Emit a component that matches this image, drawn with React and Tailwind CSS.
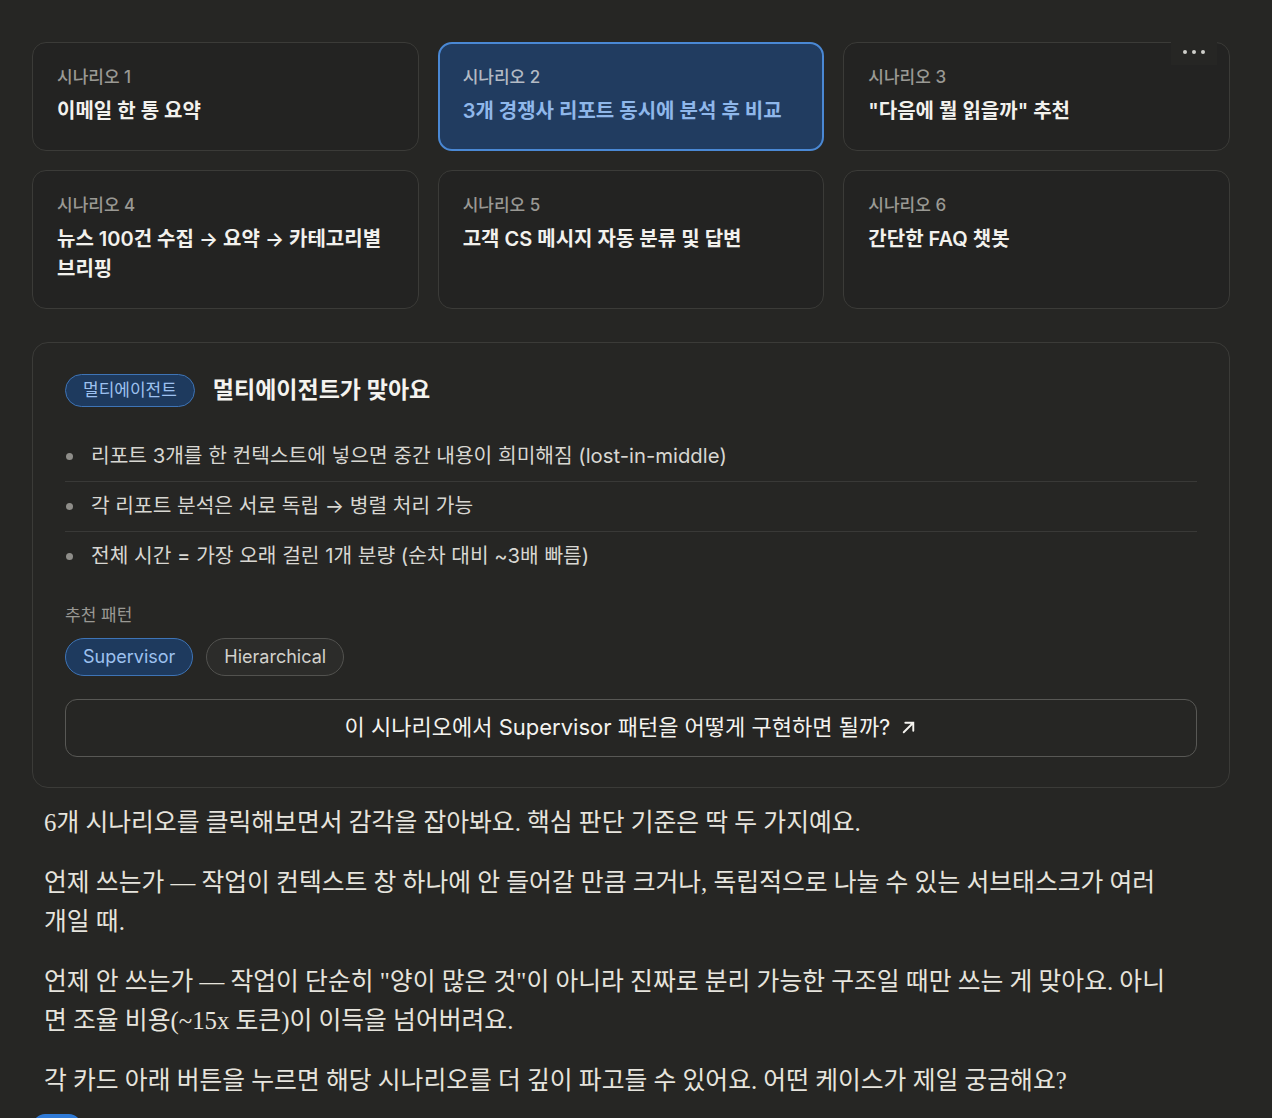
import React, { useState } from 'react';

const scenarios = [
  { id: 1, title: '이메일 한 통 요약' },
  { id: 2, title: '3개 경쟁사 리포트 동시에 분석 후 비교' },
  { id: 3, title: '"다음에 뭘 읽을까" 추천' },
  { id: 4, title: '뉴스 100건 수집 → 요약 → 카테고리별 브리핑' },
  { id: 5, title: '고객 CS 메시지 자동 분류 및 답변' },
  { id: 6, title: '간단한 FAQ 챗봇' },
];

const reasons = [
  '리포트 3개를 한 컨텍스트에 넣으면 중간 내용이 희미해짐 (lost-in-middle)',
  '각 리포트 분석은 서로 독립 → 병렬 처리 가능',
  '전체 시간 = 가장 오래 걸린 1개 분량 (순차 대비 ~3배 빠름)',
];

const widgetFont = { fontFamily: 'Inter, "Noto Sans CJK KR", sans-serif' };
const proseFont = { fontFamily: '"Liberation Serif", "Noto Sans CJK KR", serif' };

function ScenarioCard({ item, active, onSelect }) {
  return (
    <button
      type="button"
      onClick={() => onSelect(item.id)}
      className={`flex flex-col items-start justify-start text-left rounded-[14px] ${
        active
          ? 'border-2 border-[#4a88d4] bg-[#213c60] px-[23px] pt-[22px] pb-[23px]'
          : 'border border-[#3b3b38] bg-[#232322] px-6 pt-[23px] pb-[24px]'
      }`}
    >
      <div className={`text-[17px] leading-[22px] font-medium ${active ? 'text-[#b3bac4]' : 'text-[#9a9994]'}`}>
        시나리오 {item.id}
      </div>
      <div
        className={`mt-[8px] break-keep text-[20px] leading-[30px] font-semibold ${
          active ? 'text-[#8fb7ea]' : 'text-[#f2f1ed]'
        }`}
      >
        {item.title}
      </div>
    </button>
  );
}

export default function App() {
  const [selected, setSelected] = useState(2);

  return (
    <div className="min-h-screen bg-[#262624] pl-8 pt-[42px]">
      <div className="w-[1198px]" style={widgetFont}>
        <div className="relative grid grid-cols-3 gap-[19px]">
          {scenarios.map((s) => (
            <ScenarioCard key={s.id} item={s} active={s.id === selected} onSelect={setSelected} />
          ))}
          {/* hover menu */}
          <div className="absolute left-[1139px] top-[-3px] flex h-[26px] w-[46px] items-center justify-center gap-[5px] bg-[#262624]">
            <span className="h-[4px] w-[4px] rounded-full bg-[#cfcfca]" />
            <span className="h-[4px] w-[4px] rounded-full bg-[#cfcfca]" />
            <span className="h-[4px] w-[4px] rounded-full bg-[#cfcfca]" />
          </div>
        </div>

        <div className="mt-[33px] rounded-[16px] border border-[#3b3b38] px-[32px] pt-[30px] pb-[30px]">
          <div className="flex items-center gap-[18px]">
            <span className="flex h-[33px] items-center rounded-full border border-[#3e74b6] bg-[#1e3a5e] px-[17px] text-[17px] text-[#9dc1ef]">
              멀티에이전트
            </span>
            <h2 className="text-[23px] font-semibold text-[#f4f3ef]">멀티에이전트가 맞아요</h2>
          </div>

          <ul className="mt-[24px]">
            {reasons.map((r, i) => (
              <li
                key={i}
                className={`flex h-[50px] items-center gap-[18px] pl-[1px] ${
                  i < reasons.length - 1 ? 'border-b border-[#393937]' : ''
                }`}
              >
                <span className="h-[7px] w-[7px] shrink-0 rounded-full bg-[#8e8d89]" />
                <span className="text-[20.3px] text-[#d8d7d2]">{r}</span>
              </li>
            ))}
          </ul>

          <div className="mt-[22px] text-[17px] leading-[22px] text-[#9a9994]">추천 패턴</div>
          <div className="mt-[12px] flex gap-[13px]">
            <span className="flex h-[38px] items-center rounded-full border border-[#3e74b6] bg-[#1e3a5e] px-[17px] text-[18px] text-[#9dc1ef]">
              Supervisor
            </span>
            <span className="flex h-[38px] items-center rounded-full border border-[#52524f] bg-[#2c2c2a] px-[17px] text-[18px] text-[#d2d1cc]">
              Hierarchical
            </span>
          </div>

          <button
            type="button"
            className="mt-[23px] flex h-[58px] w-full items-center justify-center gap-[10px] rounded-[12px] border border-[#585855] text-[22px] text-[#f4f3ef]"
          >
            <span>이 시나리오에서 Supervisor 패턴을 어떻게 구현하면 될까?</span>
            <svg width="17" height="17" viewBox="0 0 16 16" fill="none" stroke="#f4f3ef" strokeWidth="1.8" strokeLinecap="round">
              <path d="M3.5 12.5 12.5 3.5M5 3.5h7.5V11" />
            </svg>
          </button>
        </div>
      </div>

      <div className="w-[1142px] pl-3 pt-[15px] text-[24.8px] leading-[39px] text-[#e6e4dd]" style={proseFont}>
        <p>6개 시나리오를 클릭해보면서 감각을 잡아봐요. 핵심 판단 기준은 딱 두 가지예요.</p>
        <p className="mt-[21px]">
          언제 쓰는가 — 작업이 컨텍스트 창 하나에 안 들어갈 만큼 크거나, 독립적으로 나눌 수 있는 서브태스크가 여러 개일 때.
        </p>
        <p className="mt-[21px]">
          언제 안 쓰는가 — 작업이 단순히 "양이 많은 것"이 아니라 진짜로 분리 가능한 구조일 때만 쓰는 게 맞아요. 아니면 조율 비용(~15x 토큰)이 이득을 넘어버려요.
        </p>
        <p className="mt-[21px]">
          각 카드 아래 버튼을 누르면 해당 시나리오를 더 깊이 파고들 수 있어요. 어떤 케이스가 제일 궁금해요?
        </p>
      </div>
      <div className="ml-[1px] mt-[14px] h-[24px] w-[48px] rounded-full bg-[#2f7ad6]" />
    </div>
  );
}
